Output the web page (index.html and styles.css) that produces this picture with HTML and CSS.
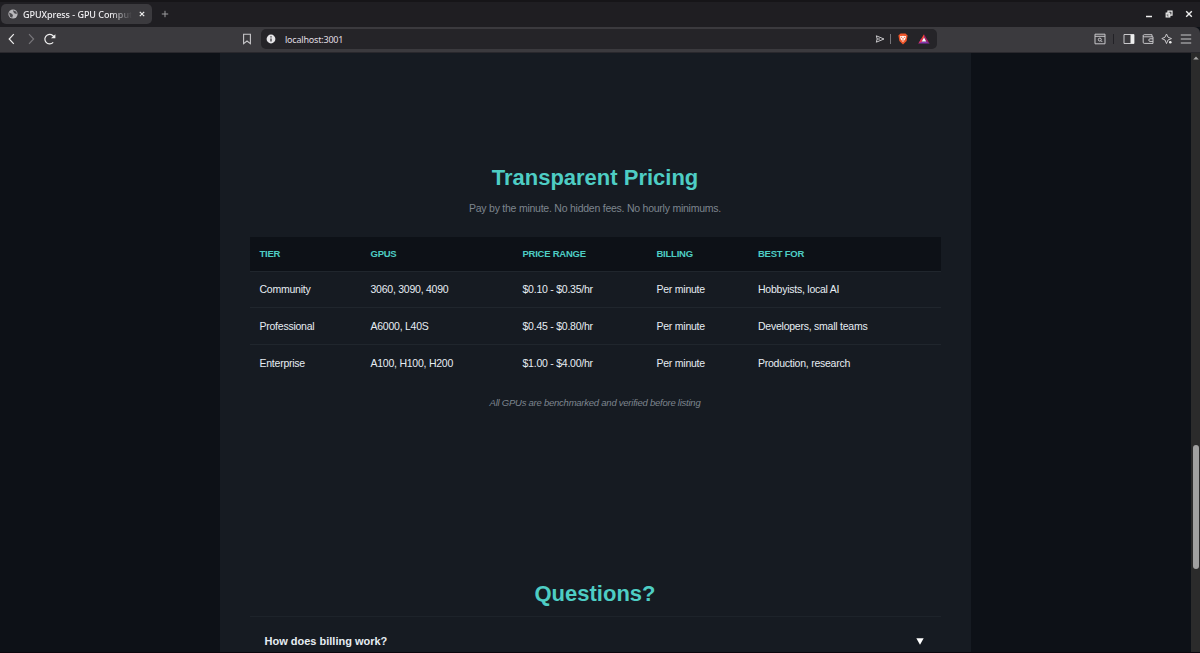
FILE: index.html
```html
<!DOCTYPE html>
<html lang="en">
<head>
  <meta charset="UTF-8">
  <title>GPUXpress - GPU Compute</title>
  <link rel="stylesheet" href="styles.css">
</head>
<body>
  <!-- Tab strip -->
  <div class="tab-strip">
    <div class="tab">
      <svg class="favicon" viewBox="0 0 10 10"><circle cx="5" cy="5" r="4.6" fill="#b9b8bb"/><path d="M1 3.6 3.4 4.4 5 6 4.2 8.8 2 7.8ZM5 1.2 8.4 2.8 8.8 5 6.6 4.4 5.4 3Z" fill="#4c4b4f"/></svg>
      <span class="tab-title">GPUXpress - GPU Comput</span>
      <svg class="tab-close" viewBox="0 0 6 6"><path d="M.8.8 5.2 5.2M5.2.8.8 5.2" stroke="#eee" stroke-width="1.2"/></svg>
    </div>
    <svg class="new-tab" viewBox="0 0 8 8"><path d="M4 .8V7.2M.8 4H7.2" stroke="#9b9a9d" stroke-width="1"/></svg>
    <div class="window-buttons">
      <svg viewBox="0 0 8 8"><path d="M1 6.5H7" stroke="#eee" stroke-width="1.5"/></svg>
      <svg viewBox="0 0 8 8"><path d="M3 1.2H7V5.2H3ZM1.2 3.2H4.8V6.8H1.2Z" fill="none" stroke="#eee" stroke-width="1.2"/></svg>
      <svg viewBox="0 0 8 8"><path d="M1.2 1.2 6.8 6.8M6.8 1.2 1.2 6.8" stroke="#eee" stroke-width="1.4"/></svg>
    </div>
  </div>

  <!-- Toolbar -->
  <div class="toolbar">
    <div class="nav-buttons">
      <svg viewBox="0 0 12 12"><path d="M7.8 1.2 3.2 6 7.8 10.8" fill="none" stroke="#eee" stroke-width="1.2"/></svg>
      <svg viewBox="0 0 12 12"><path d="M4 1.2 8.6 6 4 10.8" fill="none" stroke="#77767a" stroke-width="1.2"/></svg>
      <svg viewBox="0 0 12 12"><path d="M9.2 9.4A4.8 4.8 0 1 1 10.2 4.4" fill="none" stroke="#eee" stroke-width="1.2"/><path d="M7 5.2H11.4V1.2Z" fill="#eee"/></svg>
    </div>
    <svg class="bookmark" viewBox="0 0 10 12"><path d="M1.6 1.3H8.4V10.6L5 8 1.6 10.6Z" fill="none" stroke="#c8c7ca" stroke-width="1.1"/></svg>
    <div class="address">
      <svg class="info" viewBox="0 0 10 10"><circle cx="5" cy="5" r="4.4" fill="#e6e5e8"/><path d="M5 2.3V3.4M5 4.4V7.6" stroke="#252428" stroke-width="1.2"/></svg>
      <span class="url">localhost:3001</span>
      <svg class="send" viewBox="0 0 10 10"><path d="M1.3 1.8 9 5 1.3 8.2 2.2 5ZM2.2 5H5" fill="none" stroke="#c8c7ca" stroke-width="1"/></svg>
      <span class="address-sep"></span>
      <svg class="shield" viewBox="0 0 10 12"><path d="M2.5.5H7.5L9.6 2.6 8.6 8 5 11.5 1.4 8 .4 2.6Z" fill="#f0562a"/><path d="M2 3 4 3.2 5 2.8 6 3.2 8 3 7.4 6 5 9 2.6 6Z" fill="#fff"/><path d="M3 4.3 4.4 5M7 4.3 5.6 5M5 5V6.5M4 7.2H6" stroke="#f0562a" stroke-width=".8"/></svg>
      <svg class="bat" viewBox="0 0 12 10"><path d="M6 .3 3 5.2 6 4Z" fill="#ff4c30"/><path d="M6 .3 11.6 9.6 8.5 7.5 6 4Z" fill="#9e1f63"/><path d="M3 5.2.4 9.6H11.6L8.6 7.4H3.8Z" fill="#8a35b0"/><path d="M3 5.2.4 9.6 4 7.4 6 3Z" fill="#e9304f"/><path d="M6 3.5 8.3 7.4H3.7Z" fill="#fff"/></svg>
    </div>
    <div class="tools">
      <svg viewBox="0 0 12 12"><path d="M1 1.2H11V10.8H1ZM1 3.3H11" fill="none" stroke="#c8c7ca"/><circle cx="5.8" cy="6.6" r="1.5" fill="none" stroke="#c8c7ca"/><path d="M7 7.7 8.3 9" stroke="#c8c7ca"/></svg>
      <span class="tools-sep"></span>
      <svg viewBox="0 0 12 12"><path d="M1 1.5H11V10.5H1Z" fill="none" stroke="#c8c7ca"/><path d="M7.5 1.5H11V10.5H7.5Z" fill="#eee"/></svg>
      <svg viewBox="0 0 12 12"><path d="M10 3.8V1.7H2.2C.8 1.7.8 3.8 2.2 3.8H11V10.4H2.2Q1.2 10.4 1.2 9.2V2.8M11 5.8H8Q6.8 5.8 6.8 7.1 6.8 8.4 8 8.4H11" fill="none" stroke="#c8c7ca"/></svg>
      <svg viewBox="0 0 12 12"><path d="M5.5 1 7 4.2 10.5 5.6 7 7 5.5 10.6 4 7 .8 5.6 4 4.2Z" fill="none" stroke="#c8c7ca" stroke-linejoin="round"/><circle cx="9.3" cy="9.3" r="1.3" fill="#eee"/></svg>
      <svg viewBox="0 0 12 12"><path d="M.8 2H11.2M.8 6H11.2M.8 10H11.2" stroke="#c8c7ca" stroke-width="1.1"/></svg>
    </div>
  </div>

  <!-- Page -->
  <div class="viewport">
    <main class="page">
      <section class="pricing">
        <h2>Transparent Pricing</h2>
        <p class="subtitle">Pay by the minute. No hidden fees. No hourly minimums.</p>
        <table class="pricing-table">
          <colgroup>
            <col class="col-tier"><col class="col-gpus"><col class="col-price"><col class="col-billing"><col>
          </colgroup>
          <thead>
            <tr><th>Tier</th><th>GPUs</th><th>Price Range</th><th>Billing</th><th>Best For</th></tr>
          </thead>
          <tbody>
            <tr><td>Community</td><td>3060, 3090, 4090</td><td>$0.10 - $0.35/hr</td><td>Per minute</td><td>Hobbyists, local AI</td></tr>
            <tr><td>Professional</td><td>A6000, L40S</td><td>$0.45 - $0.80/hr</td><td>Per minute</td><td>Developers, small teams</td></tr>
            <tr><td>Enterprise</td><td>A100, H100, H200</td><td>$1.00 - $4.00/hr</td><td>Per minute</td><td>Production, research</td></tr>
          </tbody>
        </table>
        <p class="note">All GPUs are benchmarked and verified before listing</p>
      </section>
      <section class="faq">
        <h2>Questions?</h2>
        <div class="faq-item">
          <span>How does billing work?</span>
          <svg class="faq-arrow" viewBox="0 0 8 7"><path d="M.3.3H7.7L4 6.8Z" fill="#fff"/></svg>
        </div>
      </section>
    </main>
    <div class="scrollbar">
      <svg class="scroll-up" viewBox="0 0 6 4"><path d="M3 .4 5.8 3.6H.2Z" fill="#a5a5a5"/></svg>
      <div class="scroll-thumb"></div>
    </div>
  </div>
</body>
</html>
```

FILE: styles.css
```css
* {
  box-sizing: border-box;
}
body {
  margin: 0;
  height: 100vh;
  overflow: hidden;
  display: flex;
  flex-direction: column;
  background: #0d1117;
  color: #e6edf3;
  font-family: "Liberation Sans", Arial, sans-serif;
  font-size: 10.5px;
  letter-spacing: -0.24px;
}
svg {
  display: block;
  flex: none;
}

/* Tab strip */
.tab-strip {
  flex: none;
  height: 27px;
  display: flex;
  align-items: center;
  background: #1f1e22;
  border-top: 2px solid #161518;
  font-family: "Noto Sans", sans-serif;
}
.tab {
  width: 151px;
  height: 20px;
  margin: 0 0 1px 1px;
  padding: 0 7px;
  display: flex;
  align-items: center;
  border-radius: 5px;
  background: #3b3a3e;
}
.favicon {
  width: 10px;
  height: 10px;
}
.tab-title {
  width: 109px;
  margin-left: 5px;
  white-space: nowrap;
  font-size: 9px;
  font-weight: 500;
  letter-spacing: -0.04px;
  color: #f0eff2;
  -webkit-mask-image: linear-gradient(to right, #000 80%, transparent);
  mask-image: linear-gradient(to right, #000 80%, transparent);
}
.tab-close {
  width: 6px;
  height: 6px;
  margin-left: 7px;
}
.new-tab {
  width: 8px;
  height: 8px;
  margin: 0 0 1px 9px;
}
.window-buttons {
  display: flex;
  gap: 12px;
  margin-left: auto;
  padding: 0 7px 1px 0;
}
.window-buttons svg {
  width: 8px;
  height: 8px;
}

/* Toolbar */
.toolbar {
  flex: none;
  height: 26px;
  padding-bottom: 1px;
  display: flex;
  align-items: center;
  background: #3b3a3e;
  border-bottom: 1px solid #29282d;
  border-top-right-radius: 6px;
}
.nav-buttons {
  display: flex;
  gap: 7px;
  padding-left: 6px;
}
.nav-buttons svg,
.tools svg {
  width: 12px;
  height: 12px;
}
.bookmark {
  width: 10px;
  height: 12px;
  margin-left: 186px;
}
.address {
  width: 676px;
  height: 20px;
  margin-left: 9px;
  padding: 0 7px 0 5px;
  display: flex;
  align-items: center;
  border-radius: 5px;
  background: #252428;
}
.info {
  width: 10px;
  height: 10px;
}
.url {
  margin-left: 9px;
  font-family: "Noto Sans", sans-serif;
  font-size: 9px;
  letter-spacing: -0.2px;
  color: #e0dfe2;
}
.send {
  width: 10px;
  height: 10px;
  margin-left: auto;
}
.address-sep {
  width: 1px;
  height: 10px;
  margin: 0 7px 0 5px;
  background: #77767a;
}
.shield {
  width: 10px;
  height: 12px;
}
.bat {
  width: 12px;
  height: 10px;
  margin-left: 10px;
}
.tools {
  display: flex;
  align-items: center;
  gap: 7px;
  margin-left: auto;
  padding-right: 8px;
}
.tools-sep {
  width: 1px;
  height: 10px;
  margin: 0 2px 0 0;
  background: #222126;
}

/* Page */
.viewport {
  flex: 1;
  min-height: 0;
  display: flex;
  border-bottom: 1px solid #0b060d;
}
.page {
  width: 751px;
  margin: 0 auto;
  padding: 0 30.5px 0 29.5px;
  background: #161b22;
  overflow: hidden;
}
.pricing {
  padding-top: 110px;
  height: 488px;
}
h2 {
  margin: 0;
  font-size: 22px;
  line-height: 30px;
  letter-spacing: 0;
  text-align: center;
  color: #4ecdc4;
}
.subtitle {
  margin: 7px 0 21px;
  line-height: 16px;
  text-align: center;
  color: #7d858e;
}
.pricing-table {
  width: 100%;
  table-layout: fixed;
  border-collapse: collapse;
}
.col-tier { width: 111px; }
.col-gpus { width: 152px; }
.col-price { width: 134px; }
.col-billing { width: 101.5px; }
.pricing-table th,
.pricing-table td {
  padding: 0 10px;
  text-align: left;
  border-bottom: 1px solid #20262d;
}
.pricing-table th {
  height: 34px;
  font-size: 9.5px;
  text-transform: uppercase;
  color: #4ecdc4;
  background: #0d1117;
}
.pricing-table td {
  height: 36.5px;
}
.pricing-table tbody tr:last-child td {
  border-bottom: none;
}
.note {
  margin: 15px 0 0;
  font-size: 9.5px;
  line-height: 14px;
  font-style: italic;
  text-align: center;
  color: #7d858e;
}
.faq {
  padding-top: 38px;
}
.faq-item {
  height: 48px;
  margin-top: 7px;
  padding: 0 17px 0 15px;
  display: flex;
  align-items: center;
  justify-content: space-between;
  border-top: 1px solid #1d232a;
  font-size: 11px;
  font-weight: bold;
  letter-spacing: 0;
}
.faq-arrow {
  width: 8px;
  height: 7px;
  margin-top: 2px;
}

/* Scrollbar */
.scrollbar {
  width: 9px;
  display: flex;
  flex-direction: column;
  align-items: center;
  background: #2b2b2b;
}
.scroll-up {
  width: 6px;
  height: 4px;
  margin-top: 3px;
}
.scroll-thumb {
  width: 6px;
  height: 124px;
  margin-top: 385px;
  border-radius: 3px;
  background: #a0a0a0;
}
```
